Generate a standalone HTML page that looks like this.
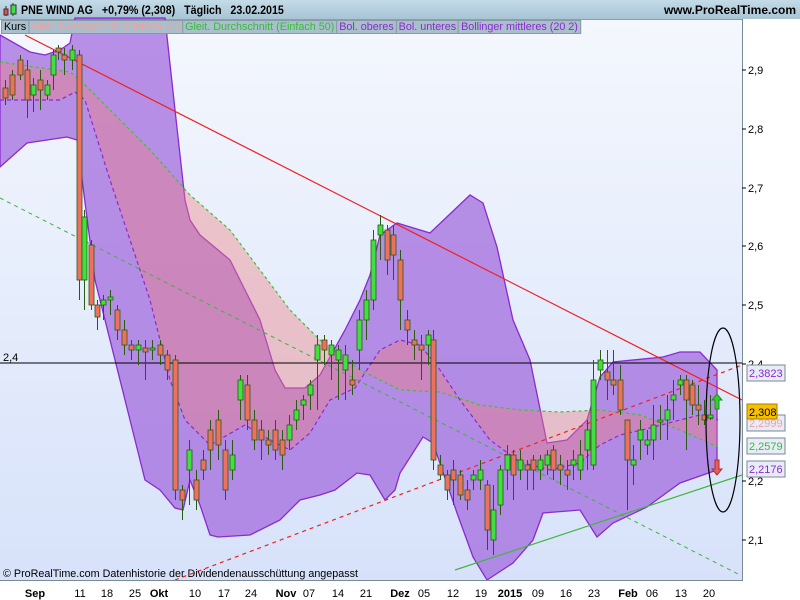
<!DOCTYPE html>
<html><head><meta charset="utf-8"><style>
body{margin:0;width:800px;height:600px;overflow:hidden;background:#fff;font-family:"Liberation Sans",sans-serif}
#hdr{position:absolute;left:0;top:0;width:800px;height:19px;background:linear-gradient(#c4dbe8,#a8c4d4);border-bottom:1px solid #8aa0b0}
#hdr .t{position:absolute;top:3px;font-size:12px;font-weight:bold;color:#000;white-space:nowrap}
#leg{position:absolute;left:1px;top:20px;height:14px;display:flex;font-size:11px;z-index:3;transform:scaleX(0.98);transform-origin:0 0;white-space:nowrap}
#leg span{background:#a9bfcc;border:1px solid #8899a6;padding:0 2px;line-height:13px;margin-right:-1px}
</style></head><body>
<div id="hdr">
<svg style="position:absolute;left:2px;top:2px" width="16" height="15"><line x1="4" y1="4" x2="4" y2="14" stroke="#333"/><rect x="2" y="7" width="4" height="6" fill="#e05050" stroke="#333"/><line x1="11" y1="1" x2="11" y2="14" stroke="#333"/><rect x="9" y="3" width="5" height="9" fill="#40e040" stroke="#333"/></svg>
<span class="t" style="left:21px;transform:scaleX(0.89);transform-origin:0 0">PNE WIND AG &nbsp;&nbsp;+0,79% (2,308) &nbsp;&nbsp;Täglich &nbsp;&nbsp;23.02.2015</span>
<span class="t" style="right:4px">www.ProRealTime.com</span>
</div>
<div id="leg"><span style="color:#000">Kurs</span><span style="color:#f0a0a0">Gleit. Durchschnitt (Einfach 20)</span><span style="color:#30c030">Gleit. Durchschnitt (Einfach 50)</span><span style="color:#8a2ad0">Bol. oberes</span><span style="color:#8a2ad0">Bol. unteres</span><span style="color:#8a2ad0">Bollinger mittleres (20 2)</span></div>
<svg id="c" style="position:absolute;left:0;top:0" width="800" height="600" font-family="Liberation Sans, sans-serif">
<defs><linearGradient id="bg" x1="0" y1="0" x2="0" y2="1"><stop offset="0" stop-color="#f4f7fd"/><stop offset="1" stop-color="#d7e2fa"/></linearGradient></defs>
<rect x="0" y="20" width="742" height="560" fill="url(#bg)"/>
<path d="M0,35 L30,52 45,55 60,50 70,43 75,18 165,18 L175,110 185,200 190,220 200,235 230,260 245,290 260,320 275,370 285,388 305,388 320,375 345,330 360,300 370,275 380,235 397,223 430,233 470,195 483,203 497,247 513,320 530,360 547,443 567,440 587,420 600,377 613,362 663,357 680,352 700,352 717,370 L717,470 680,483 647,507 613,523 597,537 580,510 543,513 533,540 513,563 487,580 473,557 457,513 433,443 423,437 400,473 395,490 385,500 370,475 357,473 335,490 320,495 300,500 280,520 250,535 218,537 210,535 200,505 190,480 183,510 175,508 160,490 145,480 115,360 95,280 77,140 67,137 27,143 0,167 Z" fill="#a066dc" fill-opacity="0.72" stroke="#8a2ad0" stroke-width="1.3"/>
<path d="M0,100 L60,100 75,92 85,100 110,180 130,240 150,300 170,380 185,420 210,445 245,425 270,440 290,450 310,433 330,400 355,388 380,350 400,340 420,345 440,370 460,400 490,440 520,462 550,470 580,463 600,445 620,435 650,428 680,420 700,415 718,420 L718,447 680,430 640,415 600,410 560,412 520,410 480,405 440,392 400,390 360,370 320,340 290,310 260,270 230,230 190,195 150,150 110,110 80,80 70,72 0,62 Z" fill="#f08080" fill-opacity="0.4"/>
<polyline points="0,100 60,100 75,92 85,100 110,180 130,240 150,300 170,380 185,420 210,445 245,425 270,440 290,450 310,433 330,400 355,388 380,350 400,340 420,345 440,370 460,400 490,440 520,462 550,470 580,463 600,445 620,435 650,428 680,420 700,415 718,420" fill="none" stroke="#8a2ad0" stroke-width="1.2" stroke-dasharray="4,3"/>
<polyline points="0,62 70,72 80,80 110,110 150,150 190,195 230,230 260,270 290,310 320,340 360,370 400,390 440,392 480,405 520,410 560,412 600,410 640,415 680,430 718,447" fill="none" stroke="#40c030" stroke-width="1.2" stroke-dasharray="3,3"/>
<line x1="0" y1="198" x2="740" y2="575" stroke="#40b040" stroke-dasharray="4,4"/>
<line x1="455" y1="570" x2="742" y2="475" stroke="#40b840" stroke-width="1.2"/>
<line x1="175" y1="580" x2="742" y2="365" stroke="#f02020" stroke-width="1.2" stroke-dasharray="4,4"/>
<line x1="25" y1="35" x2="742" y2="400" stroke="#f02020" stroke-width="1.2"/>
<line x1="0" y1="363" x2="742" y2="363" stroke="#000"/>
<text x="3" y="361" font-size="11">2,4</text>
<g id="candles"></g>
<ellipse cx="723" cy="420" rx="17" ry="92" fill="none" stroke="#000" stroke-width="1.2"/>
<path d="M717,394 l-5,6 h3 v9 h4 v-9 h3 z" fill="#30d030" stroke="#209020"/>
<path d="M717,475 l-5,-6 h3 v-9 h4 v9 h3 z" fill="#e06060" stroke="#b03030"/>
<text x="3" y="577" font-size="11" textLength="355" lengthAdjust="spacingAndGlyphs">© ProRealTime.com  Datenhistorie der Dividendenausschüttung angepasst</text>
<rect x="742" y="19" width="58" height="581" fill="#fff"/>
<rect x="0" y="580" width="742" height="20" fill="#fff"/>
<line x1="742.5" y1="19" x2="742.5" y2="581" stroke="#7a8a96"/>
<line x1="0" y1="580.5" x2="742" y2="580.5" stroke="#7a8a96"/>
<g font-size="11" fill="#000">
<text x="748" y="74">2,9</text><text x="748" y="133">2,8</text><text x="748" y="192">2,7</text><text x="748" y="250">2,6</text><text x="748" y="309">2,5</text><text x="748" y="368">2,4</text><text x="748" y="485">2,2</text><text x="748" y="544">2,1</text>
</g>
<g stroke="#000"><line x1="742" y1="70" x2="746" y2="70"/><line x1="742" y1="129" x2="746" y2="129"/><line x1="742" y1="188" x2="746" y2="188"/><line x1="742" y1="246" x2="746" y2="246"/><line x1="742" y1="305" x2="746" y2="305"/><line x1="742" y1="364" x2="746" y2="364"/><line x1="742" y1="481" x2="746" y2="481"/><line x1="742" y1="540" x2="746" y2="540"/></g>
<g font-size="11">
<rect x="747" y="365" width="38" height="16" fill="#e8ecf8" stroke="#7a8a96"/><text x="749" y="377" fill="#8a2ad0">2,3823</text>
<rect x="747" y="415" width="38" height="16" fill="#e8ecf8" stroke="#7a8a96"/><text x="749" y="427" fill="#f0a0a0">2,2999</text>
<rect x="747" y="404" width="30" height="15" fill="#f8c000" stroke="#a08000"/><text x="749" y="416" fill="#000">2,308</text>
<rect x="747" y="438" width="38" height="16" fill="#e8ecf8" stroke="#7a8a96"/><text x="749" y="450" fill="#30c030">2,2579</text>
<rect x="747" y="461" width="38" height="16" fill="#e8ecf8" stroke="#7a8a96"/><text x="749" y="473" fill="#8a2ad0">2,2176</text>
</g>
<g font-size="11" fill="#000" text-anchor="middle">
<text x="35" y="597" font-weight="bold">Sep</text><text x="80" y="597">11</text><text x="107" y="597">18</text><text x="135" y="597">25</text><text x="159" y="597" font-weight="bold">Okt</text><text x="195" y="597">10</text><text x="224" y="597">17</text><text x="251" y="597">24</text><text x="286" y="597" font-weight="bold">Nov</text><text x="309" y="597">07</text><text x="338" y="597">14</text><text x="366" y="597">21</text><text x="400" y="597" font-weight="bold">Dez</text><text x="424" y="597">05</text><text x="453" y="597">12</text><text x="481" y="597">19</text><text x="510" y="597" font-weight="bold">2015</text><text x="538" y="597">09</text><text x="566" y="597">16</text><text x="594" y="597">23</text><text x="628" y="597" font-weight="bold">Feb</text><text x="652" y="597">06</text><text x="681" y="597">13</text><text x="709" y="597">20</text>
</g>
</svg>
<script>
var d=[[5,88,98,80,105],[12,75,95,70,100],[20,60,75,55,80],[27,70,100,60,118],[33,95,85,78,112],[40,80,90,70,110],[47,95,85,80,100],[53,75,55,50,90],[58,48,52,45,60],[64,55,60,48,75],[72,60,50,45,70],[79,55,280,50,300],[84,280,217,210,310],[91,245,305,240,310],[97,305,317,300,330],[103,305,300,295,320],[110,300,297,290,315],[117,310,330,305,340],[124,330,345,320,355],[131,345,350,340,360],[138,350,345,340,365],[145,348,352,340,380],[152,350,348,340,360],[160,345,355,340,365],[167,355,370,350,380],[175,360,490,355,500],[182,490,500,485,520],[189,470,450,440,505],[196,480,500,470,510],[203,460,470,450,480],[210,430,450,420,470],[218,420,445,410,460],[225,450,490,440,500],[232,470,455,440,480],[240,400,380,375,420],[247,385,420,375,430],[254,420,440,410,450],[261,430,440,420,460],[268,440,445,430,455],[275,430,450,420,460],[282,440,455,430,470],[289,440,425,415,450],[296,420,410,400,430],[303,405,400,395,420],[310,395,385,380,410],[317,360,345,335,410],[324,340,350,335,365],[331,355,345,340,380],[338,360,350,345,400],[345,370,355,345,400],[352,380,385,360,395],[359,350,320,310,370],[366,320,300,290,340],[373,300,240,230,310],[380,235,225,215,260],[387,230,260,225,275],[393,235,255,225,280],[400,260,300,250,330],[407,320,330,310,345],[414,340,345,330,360],[421,345,350,335,380],[428,345,335,330,365],[433,340,460,330,470],[440,465,475,455,480],[447,475,490,470,500],[453,470,480,460,505],[460,475,495,470,500],[467,490,500,480,510],[473,480,475,470,490],[480,480,470,460,490],[487,485,530,480,550],[493,540,510,485,555],[500,505,470,465,515],[507,470,455,445,490],[513,455,475,450,500],[520,470,460,450,480],[527,465,470,460,490],[533,460,470,455,490],[540,470,460,455,480],[547,465,455,450,475],[553,450,470,445,480],[560,465,470,455,485],[567,470,475,460,490],[573,465,460,450,480],[580,470,455,440,480],[587,450,430,420,470],[593,465,380,360,470],[600,370,360,350,380],[607,372,380,350,400],[613,380,385,350,395],[620,380,410,365,415],[627,420,460,420,510],[633,465,460,445,485],[640,440,430,420,460],[647,445,440,430,455],[653,440,425,405,460],[660,422,420,405,440],[667,420,410,395,440],[673,400,395,380,420],[680,385,380,375,395],[686,380,400,375,450],[692,385,405,380,415],[698,405,410,385,425],[704,415,420,400,425],[710,418,415,395,420]];
var s='';d.forEach(function(c){var x=c[0],o=c[1],cl=c[2],up=cl<o,t=Math.min(o,cl),h=Math.max(2,Math.abs(o-cl));
s+='<line x1="'+(x+.5)+'" y1="'+c[3]+'" x2="'+(x+.5)+'" y2="'+c[4]+'" stroke="#2a5a10"/><rect x="'+(x-2)+'" y="'+t+'" width="5" height="'+h+'" fill="'+(up?'#40e040':'#f07060')+'" stroke="#2a5a10" stroke-width="0.8"/>';});
document.getElementById('candles').innerHTML=s;
</script>
</body></html>
